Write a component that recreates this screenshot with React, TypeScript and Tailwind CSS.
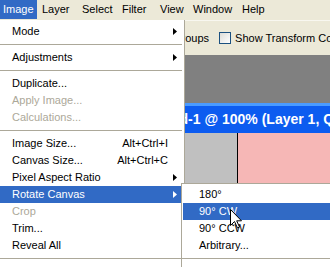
import React from 'react';

const font = { fontFamily: '"Liberation Sans", Arial, sans-serif' };

function Arrow({ white }: { white?: boolean }) {
  return (
    <svg width="4" height="7" viewBox="0 0 4 7" className="ml-auto mr-[7px] shrink-0">
      <path d="M0 0 L4 3.5 L0 7 Z" fill={white ? '#ffffff' : '#000000'} />
    </svg>
  );
}

function Sep() {
  return <div className="h-[9px] flex items-center mr-[2px]"><div className="h-px w-full bg-[#aca899]" /></div>;
}

type Item = { label: string; shortcut?: string; sub?: boolean; disabled?: boolean; active?: boolean } | 'sep';

const mainItems: Item[] = [
  { label: 'Mode', sub: true },
  'sep',
  { label: 'Adjustments', sub: true },
  'sep',
  { label: 'Duplicate...' },
  { label: 'Apply Image...', disabled: true },
  { label: 'Calculations...', disabled: true },
  'sep',
  { label: 'Image Size...', shortcut: 'Alt+Ctrl+I' },
  { label: 'Canvas Size...', shortcut: 'Alt+Ctrl+C' },
  { label: 'Pixel Aspect Ratio', sub: true },
  { label: 'Rotate Canvas', sub: true, active: true },
  { label: 'Crop', disabled: true },
  { label: 'Trim...' },
  { label: 'Reveal All' },
  'sep',
];

const subItems: Item[] = [
  { label: '180°' },
  { label: '90° CW', active: true },
  { label: '90° CCW' },
  { label: 'Arbitrary...' },
  'sep',
];

export default function App() {
  return (
    <div className="relative w-[330px] h-[267px] overflow-hidden bg-[#808080] text-[11px] text-black" style={font}>
      {/* menubar */}
      <div className="h-[20px] bg-[#ece9d8] flex items-start">
        <div className="w-[37px] h-[19px] bg-[#316ac5] text-white flex items-center pl-[3px]">Image</div>
        <div className="w-[41px] h-[19px] flex items-center pl-[5px]">Layer</div>
        <div className="w-[40px] h-[19px] flex items-center pl-[4px]">Select</div>
        <div className="w-[38px] h-[19px] flex items-center pl-[4px]">Filter</div>
        <div className="w-[33px] h-[19px] flex items-center pl-[4px]">View</div>
        <div className="w-[49px] h-[19px] flex items-center pl-[4px]">Window</div>
        <div className="h-[19px] flex items-center pl-[4px]">Help</div>
      </div>

      {/* options bar */}
      <div className="h-[35px] bg-[#ece9d8] border-t border-[#f8f7f0] flex items-center pl-[173px] whitespace-nowrap overflow-hidden">
        <span className="shrink-0">Groups</span>
        <span className="shrink-0 ml-[10px] w-[12px] h-[12px] border border-[#1c5180] bg-gradient-to-br from-[#dcdcd7] to-white" />
        <span className="shrink-0 ml-[4px]">Show Transform Controls</span>
      </div>

      {/* app background */}
      <div className="h-[48px] bg-[#808080]" />

      {/* document title bar */}
      <div className="h-[30px] bg-[#0c5cf0] border-t-[3px] border-[#4a9bff] flex items-center pl-[136px] whitespace-nowrap text-white font-bold text-[14px]">
        Untitled-1 @ 100% (Layer 1, Quick Mask/8)
      </div>

      {/* document area */}
      <div className="flex h-[134px]">
        <div className="w-[237px] bg-[#c0c0c0]" />
        <div className="w-px bg-black" />
        <div className="flex-1 bg-[#f6b7b6]" />
      </div>

      {/* Image menu */}
      <div className="absolute left-0 top-[20px] w-[185px] h-[260px] bg-white border-r border-[#aca899] pt-[3px]">
        {mainItems.map((it, i) =>
          it === 'sep' ? (
            <Sep key={i} />
          ) : (
            <div
              key={i}
              className={`h-[17px] flex items-center pl-[12px] whitespace-nowrap ${
                it.active ? 'bg-[#316ac5] text-white' : it.disabled ? 'text-[#aca899]' : ''
              }`}
            >
              <span>{it.label}</span>
              {it.shortcut && <span className="ml-auto mr-[16px]">{it.shortcut}</span>}
              {it.sub && <Arrow white={it.active} />}
            </div>
          )
        )}
      </div>

      {/* Rotate Canvas submenu */}
      <div className="absolute left-[181px] top-[183px] w-[160px] h-[100px] bg-white border-l border-t border-[#aca899] pt-[2px]">
        {subItems.map((it, i) =>
          it === 'sep' ? (
            <Sep key={i} />
          ) : (
            <div
              key={i}
              className={`h-[17px] flex items-center pl-[16px] ml-[1px] whitespace-nowrap ${
                it.active ? 'bg-[#316ac5] text-white' : ''
              }`}
            >
              {it.label}
            </div>
          )
        )}
      </div>

      {/* mouse cursor */}
      <svg className="absolute left-[230px] top-[209px]" width="13" height="20" viewBox="0 0 13 20">
        <path d="M0.5 0.5 L0.5 16.5 L4.5 12.5 L7.5 19 L9.5 18 L6.7 11.8 L11.5 11.8 Z" fill="#ffffff" stroke="#000000" strokeWidth="1" />
      </svg>
    </div>
  );
}
